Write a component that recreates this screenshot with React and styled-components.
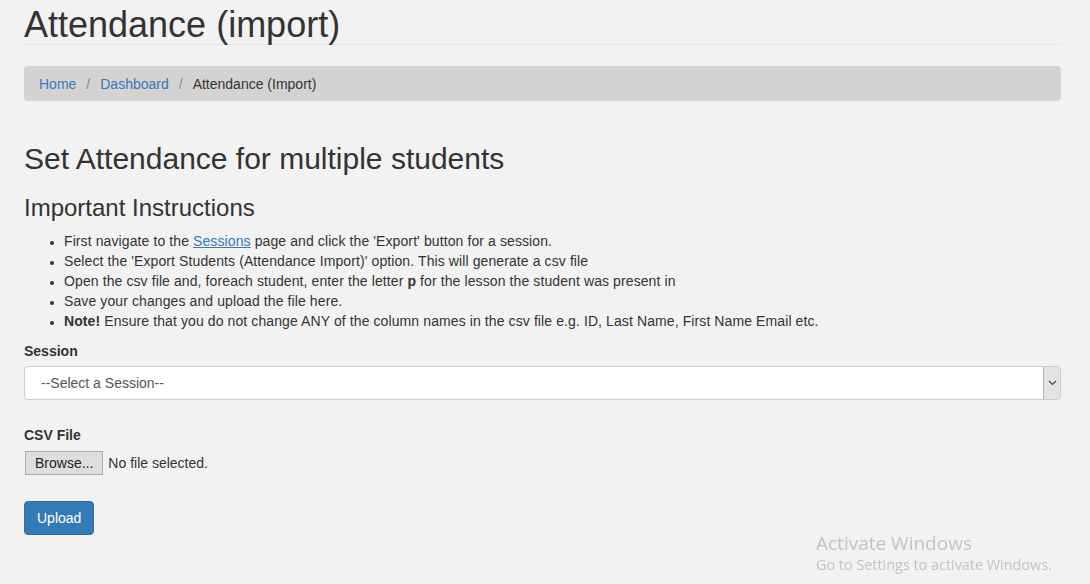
import React from 'react';
import styled, { createGlobalStyle } from 'styled-components';

const GlobalStyle = createGlobalStyle`
  html, body {
    margin: 0;
    padding: 0;
    background: #f2f2f2;
  }
  body {
    font-family: "Liberation Sans", Arial, Helvetica, sans-serif;
    font-size: 14px;
    line-height: 20px;
    color: #333;
  }
  * { box-sizing: border-box; }
`;

const Page = styled.div`
  min-height: 584px;
  padding: 0 29px 0 24px;
`;

const PageHeader = styled.div`
  padding-top: 5px;
  border-bottom: 1px solid #e6e6e6;
`;

const Title = styled.h1`
  margin: 0;
  font-size: 36px;
  font-weight: 500;
  line-height: 39px;
  color: #333;
`;

const Breadcrumb = styled.ol`
  display: flex;
  list-style: none;
  margin: 21px 0 0;
  padding: 8px 15px 7px;
  background: #d4d3d2;
  border-radius: 4px;
  line-height: 20px;

  li + li::before {
    content: '/';
    padding: 0 10px;
    color: #8a8a8a;
  }
`;

const Crumb = styled.li`
  color: ${(p) => (p.$active ? '#333' : '#337ab7')};
`;

const Heading = styled.h2`
  margin: 41px 0 0;
  font-size: 30px;
  font-weight: 500;
  line-height: 33px;
`;

const SubHeading = styled.h3`
  margin: 20px 0 10px;
  font-size: 24px;
  font-weight: 500;
  line-height: 26px;
`;

const Steps = styled.ul`
  margin: 0 0 10px;
  padding-left: 40px;
  letter-spacing: 0.1px;
  li::marker { font-size: 12px; }
`;

const Link = styled.a`
  color: #337ab7;
  text-decoration: underline;
`;

const FormGroup = styled.div`
  margin-bottom: ${(p) => p.$gap || 15}px;
`;

const Label = styled.label`
  display: block;
  margin-bottom: 5px;
  font-weight: bold;
  color: #333;
`;

const Select = styled.div`
  display: flex;
  height: 34px;
  background: #fff;
  border: 1px solid #ccc;
  border-radius: 4px;
  overflow: hidden;
`;

const SelectText = styled.div`
  flex: 1;
  padding: 6px 16px;
  color: #555;
`;

const ArrowBox = styled.div`
  width: 17px;
  display: flex;
  align-items: center;
  justify-content: center;
  background: #e3e3e3;
  border-left: 1px solid #b5b5b5;
`;

const FileRow = styled.div`
  display: flex;
  align-items: center;
  gap: 5px;
  padding-top: 1px;
`;

const BrowseButton = styled.button`
  font-family: inherit;
  font-size: 14px;
  height: 24px;
  padding: 0 9px;
  margin-left: 1px;
  color: #222;
  background: #dedede;
  border: 1px solid #adadad;
  border-radius: 0;
`;

const FileName = styled.span`
  color: #333;
`;

const PrimaryButton = styled.button`
  font-family: inherit;
  font-size: 14px;
  line-height: 20px;
  padding: 6px 12px;
  color: #fff;
  background: #337ab7;
  border: 1px solid #2e6da4;
  border-radius: 4px;
`;

const Watermark = styled.div`
  position: fixed;
  left: 816px;
  top: 530px;
  color: #c3c3c3;
  font-family: "Open Sans", "Noto Sans", sans-serif;
`;

const WatermarkTitle = styled.div`
  font-size: 19px;
  line-height: 26px;
`;

const WatermarkText = styled.div`
  font-size: 14.4px;
  line-height: 18px;
`;

export default function App() {
  return (
    <Page>
      <GlobalStyle />
      <PageHeader>
        <Title>Attendance (import)</Title>
      </PageHeader>
      <Breadcrumb>
        <Crumb>Home</Crumb>
        <Crumb>Dashboard</Crumb>
        <Crumb $active>Attendance (Import)</Crumb>
      </Breadcrumb>

      <Heading>Set Attendance for multiple students</Heading>
      <SubHeading>Important Instructions</SubHeading>
      <Steps>
        <li>
          First navigate to the <Link>Sessions</Link> page and click the 'Export' button for a session.
        </li>
        <li>Select the 'Export Students (Attendance Import)' option. This will generate a csv file</li>
        <li>
          Open the csv file and, foreach student, enter the letter <b>p</b> for the lesson the student was present in
        </li>
        <li>Save your changes and upload the file here.</li>
        <li>
          <b>Note!</b> Ensure that you do not change ANY of the column names in the csv file e.g. ID, Last Name, First Name Email etc.
        </li>
      </Steps>

      <FormGroup $gap={25}>
        <Label>Session</Label>
        <Select>
          <SelectText>--Select a Session--</SelectText>
          <ArrowBox>
            <svg width="9" height="6" viewBox="0 0 9 6">
              <path d="M1 1l3.5 3.5L8 1" fill="none" stroke="#444" strokeWidth="1.2" />
            </svg>
          </ArrowBox>
        </Select>
      </FormGroup>

      <FormGroup $gap={26}>
        <Label>CSV File</Label>
        <FileRow>
          <BrowseButton>Browse...</BrowseButton>
          <FileName>No file selected.</FileName>
        </FileRow>
      </FormGroup>

      <PrimaryButton>Upload</PrimaryButton>

      <Watermark>
        <WatermarkTitle>Activate Windows</WatermarkTitle>
        <WatermarkText>Go to Settings to activate Windows.</WatermarkText>
      </Watermark>
    </Page>
  );
}
